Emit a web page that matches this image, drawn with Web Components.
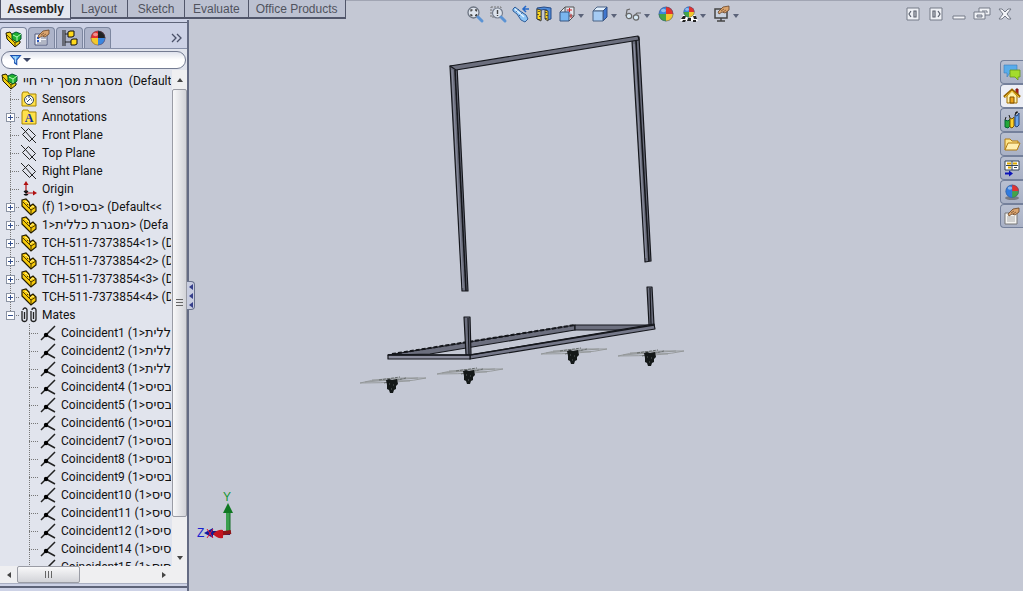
<!DOCTYPE html>
<html lang="en">
<head>
<meta charset="utf-8">
<title>Assembly</title>
<style>
html, body { margin: 0; height: 100%; }
body { background: #c4c8d4; overflow: hidden; font-family: Roboto, "DejaVu Sans", sans-serif; font-size: 12px; color: #111; }
</style>
</head>
<body>
<cad-app></cad-app>
<script>
const part = '<path d="M1 1l4-1 3 3 1 4 3-2 3 3v4l-5 4-9-9z" fill="#f6c90a" stroke="#221b00" stroke-width="1.2"/><path d="M2 3l8 8v4M10 11l5-3M5 7l3-3M8 9l3-3" fill="none" stroke="#4d3b00"/><path d="M4 3l1-1 3 3M9 9l3-2 1 1" fill="none" stroke="#ffee80" stroke-width="1"/>';
const ball = '<circle cx="8" cy="8" r="7.3" fill="#e33"/><path d="M8 .7A7.3 7.3 0 0 0 .7 8H8z" fill="#43a047"/><path d="M.7 8a7.3 7.3 0 0 0 7.3 7.3V8z" fill="#2f73dd"/><path d="M8 8v7.3A7.3 7.3 0 0 0 15.3 8z" fill="#f3c82c"/><circle cx="8" cy="8" r="7" fill="none" stroke="#4b5572" stroke-opacity=".5"/><ellipse cx="5.5" cy="4.5" rx="2.5" ry="1.8" fill="#fff" opacity=".45"/>';
const quad = (a, b, c, d) => `<circle cx="8" cy="8" r="7.3" fill="${a}"/><path d="M8 .7A7.3 7.3 0 0 1 15.3 8H8z" fill="${b}"/><path d="M.7 8a7.3 7.3 0 0 0 7.3 7.3V8z" fill="${c}"/><path d="M8 8v7.3A7.3 7.3 0 0 0 15.3 8z" fill="${d}"/><circle cx="8" cy="8" r="7" fill="none" stroke="#4b5572" stroke-opacity=".5"/><ellipse cx="5.5" cy="4.5" rx="2.5" ry="1.8" fill="#fff" opacity=".45"/>`;
const sphere = quad("#3b86e0", "#e2332f", "#43a547", "#f3c82c");
const shaded = quad("#e2332f", "#222", "#f3c82c", "#3b86e0");
const pane = quad("#2f7be0", "#e2332f", "#2f7be0", "#43a547");
const hand = '<path d="M4 6l5-5 6-1v4l-4 3-3-1-3 2z" fill="#dba56f" stroke="#6b4526" stroke-width=".8"/><path d="M7 5l3-2M9 6l3-2" stroke="#6b4526" stroke-width=".7"/>';
const ICONS = {
  assembly: '<path d="M0 2l4-1 4 5 2 3 4 1v2l-5 4-8-8z" fill="#f0cf10" stroke="#221b00"/><path d="M1 4l8 8v3M9 12l5-3" fill="none" stroke="#5a4600"/><path d="M6 3l4-2 5 2v5l-4 3-5-3z" fill="#20b030" stroke="#053"/><path d="M7 4l4 2v4M11 6l4-3" fill="none" stroke="#b8ffb8"/>',
  part,
  sensors: '<path d="M1 3l1-2h5l1 2h7v12H1z" fill="#ffe14a" stroke="#a88400"/><circle cx="8" cy="9" r="4.5" fill="#fff" stroke="#345"/><path d="M6 11l4-4M5 8h1M8 5v2M11 9h-1" stroke="#246"/>',
  annotations: '<path d="M1 3l1-2h5l1 2h7v12H1z" fill="#ffe14a" stroke="#a88400"/><text x="8" y="13" text-anchor="middle" font-family="Liberation Serif, serif" font-weight="bold" font-size="12" fill="#1530a8">A</text>',
  plane: '<path d="M7.500 1.500l7 7-6 6-7-7zM0 0l4 4M11 12l4 4M4 4l7 8" fill="none" stroke="#222"/>',
  origin: '<path d="M5 12V3M5 12h8" stroke="#b01010" stroke-width="1.2"/><path d="M5 0l2.500 4h-5zM16 12l-4 2.500v-5z" fill="#b01010"/><path d="M3 10l4 4M7 10l-4 4M5 9v6" stroke="#111" stroke-width="1.2"/>',
  mates: '<path d="M1 4v8a2.500 2.500 0 0 0 5 0V3a2 2 0 0 0-4 0M3.500 5v7M10 4v8a2.500 2.500 0 0 0 5 0V3a2 2 0 0 0-4 0M12.500 5v7" fill="none" stroke="#222" stroke-width="1.300"/>',
  coincident: '<path d="M1 15L15 1M6 10l9 5" stroke="#222" stroke-width="1.500"/><circle cx="6" cy="10" r="2.200" fill="#000"/>',
  props: '<path d="M1 4h12v11H1z" fill="#f2f4fa" stroke="#51597a"/><path d="M3 8h2M3 11h2" stroke="#2b57c0" stroke-width="2"/><path d="M7 8h5M7 11h5M3 13h9" stroke="#71798f"/>' + hand,
  config: '<path d="M1 0v16M3 0v16M3 4h3M3 12h7" stroke="#222"/><path d="M6 2l2-1h4v5l-2 1H6zM9 10l2-1h4v5l-2 1H9z" fill="#ffd91c" stroke="#111"/>',
  sphere, shaded,
  chevrons: '<path d="M3 4l4 4-4 4M8 4l4 4-4 4" fill="none" stroke="#4a5068" stroke-width="1.300"/>',
  funnel: '<path d="M1 2h13L9 8v6l-3-2V8z" fill="#65b5f4" stroke="#1c4fae" stroke-width="1.400"/><path d="M4 4h4L7 7v4" fill="none" stroke="#d8f0ff"/>',
  zoomfit: '<circle cx="6.500" cy="6.500" r="5.500" fill="#dde3ec" stroke="#6c7482" stroke-width="1.300"/><path d="M4 5.500V4h1.500M8 4h1.500v1.500M9.500 8v1.500H8M5.500 9.500H4V8" fill="none" stroke="#444" stroke-width="1.300"/><path d="M11 11l4 4" stroke="#5b93d4" stroke-width="3" stroke-linecap="round"/>',
  zoomarea: '<path d="M1 1h10v10H1z" fill="none" stroke="#777" stroke-dasharray="2 1"/><circle cx="7.500" cy="7" r="5" fill="#dde3ec" stroke="#777f8e" stroke-width="1.200"/><path d="M7.500 4v4M7.500 9v1" stroke="#444" stroke-width="1.400"/><path d="M11 11l4 4" stroke="#5b93d4" stroke-width="3" stroke-linecap="round"/>',
  prev: '<path d="M0 3l2-2 5 4 6 4 2 4-3 3-4-2-4-6-4-3z" fill="#8cc4f5" stroke="#315d98"/><path d="M3 6l3-3M6 10l4-4" stroke="#315d98"/><path d="M2 3l9 8" stroke="#e4f4ff" stroke-width="1.500"/><path d="M16 3h-5M13 0l-3 3 3 3" fill="none" stroke="#2568c8" stroke-width="1.500"/>',
  section: '<path d="M1 2q7-2 14 0v11l-4 1V4q-3-1-6 0v10l-4-1z" fill="#4e8cdc" stroke="#274b86"/><path d="M1 3l4 1v11l-4-2zM9 4l3 1v10l-3-2z" fill="#ffd91c" stroke="#444"/><path d="M3 5v1M2 8v1M4 10v1M3 13v1M10 6v1M11 9v1M10 12v1" stroke="#222" stroke-width="1.300"/>',
  orient: '<path d="M1 6l5-5h9v9l-5 5M6 1v9h9" fill="#e6e8ef" stroke="#555"/><path d="M1 6h9v9H1z" fill="#79b5ef" stroke="#3a5681"/><path d="M8 4h5M10.500 2v4M12 8v4" stroke="#c22"/>',
  cube: '<path d="M1 5l4-4h10l-4 4z" fill="#e1effc" stroke="#4b6384"/><path d="M11 5l4-4v10l-4 4z" fill="#3f77cf" stroke="#2f4d84"/><path d="M1 5h10v10H1z" fill="#a5cbf3" stroke="#4b6384"/>',
  glasses: '<path d="M1 10l1-6 3-1M9 10l3-3 4 0" fill="none" stroke="#666" stroke-width="1.200"/><circle cx="4" cy="10" r="2.700" fill="#d7e9f5" stroke="#666" stroke-width="1.200"/><circle cx="11" cy="11.500" r="2.700" fill="#d7e9f5" stroke="#666" stroke-width="1.200"/>',
  scene: '<path d="M2 9h12l3 6H-1z" fill="#fff"/><path d="M2 10h3l-1 3H0zM7 12h3v3H6zM12 10h3l1 3h-3zM2 14h3l-1 2H1zM12 14h3v2h-3z" fill="#222"/><g transform="translate(2 0) scale(.75)">' + sphere + '</g>',
  monitor: '<path d="M1 3h12v9H1z" fill="#c9d2df" stroke="#444" stroke-width="1.500"/><path d="M7 12v3M3 15h8" stroke="#444" stroke-width="1.500"/>' + hand,
  winleft: '<path d="M2 2h12v12H2z" fill="#eef0f5" stroke="#747a87"/><path d="M9 5h2v6H9zM6 5L4 8l2 3" fill="none" stroke="#5a606d" stroke-width="1.200"/>',
  winright: '<path d="M2 2h12v12H2z" fill="#eef0f5" stroke="#747a87"/><path d="M5 5h2v6H5zM10 5l2 3-2 3" fill="none" stroke="#5a606d" stroke-width="1.200"/>',
  min: '<path d="M2 10h12v3H2z" fill="#f3f4f8" stroke="#747a87"/>',
  restore: '<path d="M5 2h11v7H5z" fill="#f0f2f6" stroke="#747a87"/><path d="M8 5h5v2" fill="none" stroke="#747a87"/><path d="M0 6h11v7H0z" fill="#f0f2f6" stroke="#747a87"/><path d="M3 9h5v2H3z" fill="#c4c8d4" stroke="#747a87"/>',
  close: '<path d="M2 3h3l3 3 3-3h3l-4 5 4 5h-3l-3-3-3 3H2l4-5z" fill="#f3f4f8" stroke="#747a87"/>',
  chat: '<path d="M0 1h13v8H6l-3 4V9H0z" fill="#58aceb" stroke="#3c7db8" stroke-width=".6"/><path d="M6 6h10v7h-2v3l-3-3H6z" fill="#a4dc2c" stroke="#64961c" stroke-width=".8"/>',
  home: '<path d="M12 1h2v6h-2z" fill="#c22" stroke="#711"/><path d="M3 8l5-5 5 5v7H3z" fill="#fff3ae" stroke="#a06c00"/><path d="M0 9l8-7 8 7" fill="none" stroke="#986600" stroke-width="2.600"/><path d="M1 9l7-6 7 6" fill="none" stroke="#ffd13a"/><path d="M6 9h4v6H6z" fill="#eda61c" stroke="#805000"/>',
  library: '<path d="M1 8l3 1 2-2v7l-2 2-3-1z" fill="#25a838" stroke="#063"/><path d="M6 6l2 1 2-2v9l-2 2-2-1z" fill="#ffd22a" stroke="#750"/><path d="M11 3l2 1 2-3v12l-2 2-2-1z" fill="#6ba4ec" stroke="#247"/><path d="M1 8l1-3M6 6L5 3M11 3l1-3h2" stroke="#222"/>',
  folder: '<path d="M1 14V3h5l2 2h6v3" fill="#ffe58a" stroke="#b07a10"/><path d="M1 14l3-7h12l-3 7z" fill="#ffefb0" stroke="#b07a10"/>',
  palette: '<path d="M1 1h14v9H1z" fill="#fff" stroke="#345"/><path d="M3 3.500h4M9 3.500h4M4 7.500h3" stroke="#dba900" stroke-width="2"/><path d="M2 5.500h12M10 7.500h3M8 1v9" stroke="#345"/><path d="M1 13.500h5" stroke="#0a12b8" stroke-width="2"/><path d="M5 10.500l4 3-4 3z" fill="#0a12b8"/>',
  ballshade: '<ellipse cx="8" cy="14" rx="7" ry="2" fill="#555" opacity=".6"/><g transform="translate(1 0) scale(.9)">' + pane + '</g>',
  custom: '<path d="M1 5h12v11H1z" fill="#f4f4f2" stroke="#777"/><path d="M3 9h8M3 11h8M3 13h8" stroke="#aaa"/>' + hand
};
const icon = (name, size = 16) => `<svg width="${size}" height="${size}" viewBox="0 0 16 16" overflow="visible" aria-hidden="true">${ICONS[name]}</svg>`;

function define(name, css, html) {
  customElements.define(name, class extends HTMLElement {
    constructor() {
      super();
      this.attachShadow({ mode: "open" }).innerHTML =
        `<style>*{box-sizing:border-box} button{font:inherit;color:inherit;padding:0;border:0;background:none} svg{display:block;flex:none} ${css}</style>` +
        (typeof html === "function" ? html(this) : html);
    }
  });
}

define("ribbon-tabs", `
  :host { display:flex; height:20px; font:12px "Liberation Sans", Arial, sans-serif; color:#50535e; }
  button { height:19px; padding:0 7px; background:#bcc1d1; border:solid #51566a; border-width:0 1px 2px 0; }
  .mid { min-width:57px; }
  .wide { padding:0 8px; }
  .on { height:20px; padding:0 6px 1px; min-width:71px; background:#e4e7ef; color:#222; font-weight:bold; border-left-width:1px; border-bottom-color:#6d7288; }`,
  `<button class="on">Assembly</button><button class="mid">Layout</button><button class="mid">Sketch</button><button class="wide">Evaluate</button><button>Office Products</button>`);

define("panel-tabs", `
  :host { display:flex; gap:1px; height:26px; padding-top:4px; background:linear-gradient(#8790a9,#8790a9) 0 100%/100% 1px no-repeat #cdd2e6; }
  button { width:27px; height:21px; display:grid; place-items:center; background:#adb4ca; border:1px solid #7c869f; border-bottom:0; border-radius:4px 4px 0 0; }
  .on { background:#e4e6f0; height:22px; }
  .more { margin-left:auto; margin-right:2px; width:16px; background:none; border:0; }`,
  `<button class="on" aria-label="Feature tree">${icon("assembly")}</button><button aria-label="Properties">${icon("props")}</button><button aria-label="Configurations">${icon("config")}</button><button aria-label="Display">${icon("shaded")}</button><button class="more" aria-label="More">${icon("chevrons")}</button>`);

define("tree-filter", `
  :host { display:block; padding:2px 1px 1px; background:#e1e4ed; }
  label { display:flex; align-items:center; height:18px; padding-left:8px; background:linear-gradient(#dfe2ec,#fff 50%); border:1px solid #747c92; border-radius:9px; }
  i { margin:0 1px; border:solid transparent; border-width:4px 4px 0; border-top-color:#3b4564; }
  input { flex:1; min-width:0; height:14px; border:0; padding:0; background:none; outline:0; font:inherit; }`,
  `<label>${icon("funnel", 12)}<i></i><input aria-label="Filter tree"></label>`);

define("tree-row", `
  :host { display:flex; align-items:center; height:18px; line-height:18px; white-space:pre; }
  .guide { flex:none; align-self:stretch; width:21px; display:flex; align-items:center; padding-left:6px;
    background:repeating-linear-gradient(90deg,#777 0 1px,transparent 1px 2px) 10px 9px/10px 1px no-repeat, repeating-linear-gradient(#777 0 1px,transparent 1px 2px) 10px 0/1px 100% no-repeat; }
  :host([root]) .guide { display:none; }
  :host([root]) { padding-left:2px; }
  :host([deep]) { padding-left:19px; }
  :host([last]) .guide { background-size:10px 1px,1px 50%; }
  .guide button { width:9px; height:9px; background:linear-gradient(#34508f,#34508f) center/5px 1px no-repeat, linear-gradient(#34508f,#34508f) center/1px 5px no-repeat, #fff; border:1px solid #8b93a3; }
  .guide .open { background:linear-gradient(#34508f,#34508f) center/5px 1px no-repeat, #fff; }
  .text { margin-left:5px; height:18px; }`,
  h => `<span class="guide">${h.hasAttribute("box") ? `<button class="${h.getAttribute("box")}" aria-label="Expand or collapse"></button>` : ""}</span>${icon(h.getAttribute("icon"))}<span class="text"><slot></slot></span>`);

const row = (ic, text, attrs = "") => `<tree-row icon="${ic}" role="treeitem" ${attrs}>${text.replace(/</g, "&lt;").replace(/[\u05d0-\u05ea]+( [\u05d0-\u05ea]+)*/g, '<span lang="he">$&</span>')}</tree-row>`;
const mates = [1,2,3,4,5,6,7,8,9,10,11,12,14,15].map(n => row("coincident", `Coincident${n} (${n < 4 ? "כללית" : "בסיס"}<1`, "deep")).join("");
define("feature-tree", `
  :host { display:block; overflow:hidden; background:#e1e4ed; padding-top:2px; border-right:1px solid #e1e4ed; }
  div { overflow:hidden; }
  [lang=he] { font-size:13px; line-height:1; }`,
  `<div role="tree">` +
  row("assembly", "מסגרת מסך ירי חיי  (Default", "root") +
  row("sensors", "Sensors") + row("annotations", "Annotations", 'box="plus"') +
  row("plane", "Front Plane") + row("plane", "Top Plane") + row("plane", "Right Plane") + row("origin", "Origin") +
  row("part", "(f) בסיס<1> (Default<<", 'box="plus"') + row("part", "מסגרת כללית<1> (Defa", 'box="plus"') +
  [1,2,3,4].map(n => row("part", `TCH-511-7373854<${n}> (D`, 'box="plus"')).join("") +
  row("mates", "Mates", 'box="open" last') + mates + `</div>`);

define("scroll-bar", `
  :host { display:flex; flex-direction:column; background:#efeff1; }
  button { flex:none; width:15px; height:19px; display:grid; place-items:center; }
  i { border:solid transparent; border-width:0 3px 4px; border-bottom-color:#444; }
  .end { height:17px; }
  .end i { transform:rotate(180deg); }
  .track { flex:1; display:flex; flex-direction:column; }
  .thumb { flex:0 0 93%; display:grid; place-items:center; background:linear-gradient(90deg,#f8f8f9,#d2d3d8); border:1px solid #9a9ca5; border-radius:2px; }
  .grip { width:7px; height:7px; background:repeating-linear-gradient(#666 0 1px,transparent 1px 3px); }
  :host([horizontal]), :host([horizontal]) .track { flex-direction:row; }
  :host([horizontal]) button { width:17px; height:auto; }
  :host([horizontal]) i { transform:rotate(-90deg); }
  :host([horizontal]) .end i { transform:rotate(90deg); }
  :host([horizontal]) .thumb { flex-basis:46%; background:linear-gradient(#f8f8f9,#d2d3d8); }
  :host([horizontal]) .grip { background:repeating-linear-gradient(90deg,#666 0 1px,transparent 1px 3px); }`,
  `<button aria-label="Back"><i></i></button><div class="track"><div class="thumb"><div class="grip"></div></div></div><button class="end" aria-label="Forward"><i></i></button>`);

define("side-panel", `
  :host { display:grid; grid-template:3px auto auto minmax(0,1fr) 17px 8px / minmax(0,1fr) 15px; background:#cdd2e6; border-right:2px solid #646b83; position:relative; }
  .edge, panel-tabs, tree-filter { grid-column:1/3; }
  .edge { border-bottom:1px solid #5d6378; }
  .foot { grid-column:1/3; border-top:1px solid #a9afc2; background:linear-gradient(#5d6378,#5d6378) 0 2px/100% 2px no-repeat; }
  .corner { background:#efeff1; }
  .split { position:absolute; left:100%; top:261px; width:8px; height:29px; display:flex; flex-direction:column; align-items:center; justify-content:space-around; background:#c8cde0; border:1px solid #69728c; border-left:0; border-radius:0 4px 4px 0; }
  .split i { border:solid transparent; border-width:3px 4px 3px 0; border-right-color:#353e8a; }`,
  `<div class="edge"></div><panel-tabs></panel-tabs><tree-filter></tree-filter><feature-tree></feature-tree><scroll-bar></scroll-bar><scroll-bar horizontal></scroll-bar><div class="corner"></div><div class="foot"></div><button class="split" aria-label="Collapse panel"><i></i><i></i><i></i></button>`);

const tool = (name, label, drop) => `<button aria-label="${label}" class="${drop ? "drop" : ""}">${icon(name)}${drop ? "<i></i>" : ""}</button>`;
define("view-toolbar", `
  :host { display:flex; justify-content:center; gap:5px; height:26px; padding-right:6px; box-sizing:border-box; align-items:center; }
  button { width:18px; height:20px; display:flex; align-items:center; gap:3px; padding:0 1px; }
  .drop { width:28px; }
  i { flex:none; margin-top:3px; border:solid transparent; border-width:4px 3px 0; border-top-color:#5b6379; }`,
  tool("zoomfit","Zoom to fit") + tool("zoomarea","Zoom to area") + tool("prev","Previous view") + tool("section","Section view") + tool("orient","View orientation",1) + tool("cube","Display style",1) + tool("glasses","Hide or show",1) + tool("sphere","Appearance") + tool("scene","Scene",1) + tool("monitor","View settings",1));

define("window-controls", `
  :host { display:flex; gap:5px; }
  button { width:18px; height:18px; display:grid; place-items:center; }`,
  ["winleft","winright","min","restore","close"].map(n => `<button aria-label="${n}">${icon(n, 16)}</button>`).join(""));

define("task-pane", `
  :host { display:flex; flex-direction:column; width:23px; }
  button { height:24px; display:grid; place-items:center; background:linear-gradient(#b9c0d1,#a9b1c5); border:1px solid #74809b; border-right:0; border-radius:4px 0 0 4px; }
  .on { background:#eceef5; }`,
  ["chat","home","library","folder","palette","ballshade","custom"].map(n => `<button class="${n === "home" ? "on" : ""}" aria-label="${n}">${icon(n)}</button>`).join(""));

const caster = (x, y) => `<g transform="translate(${x} ${y})"><path d="M-32 1Q-12-5 34-4Q12 1-32 1M-27 0L26-4M-20-2L18-1" fill="none" stroke="#8d9091" stroke-width=".8"/><path d="M-13-2L8-5M-8 1L14-4" stroke="#666b6b" stroke-dasharray="3 1"/><path d="M-6-2l3-1 3 1 5-1 1 5-2 2v3l-2 1-1 3h-3l-1-3-2-1v-4z" fill="#141818"/><path d="M-3 2h1M1 3h1M-1 7h1" stroke="#596060"/></g>`;
define("model-scene", `
  :host { display:block; min-height:0; }
  svg { width:100%; height:100%; }`,
  `<svg viewBox="189 26 834 565" role="img" aria-label="Frame assembly model">
    <g fill="#6c6f7e" stroke="#15171c" stroke-width="1.200" stroke-linejoin="round">
      <path d="M450 66l7 0 11 225-6 0z"/><path d="M455 70l11 221" stroke-width="1.600"/><path d="M452 70l11 218" stroke="#8b8fa0" stroke-width="1"/>
      <path d="M632 41l7-4 12 224-6 1z"/><path d="M636 41l13 220" stroke-width="1.600"/><path d="M634 44l12 214" stroke="#8b8fa0" stroke-width="1"/>
      <path d="M450 66l188-30 1 4-183 30z"/>
      <path d="M388 355l187-30v5l-145 24z"/><path d="M392 354l183-29" stroke-width="2" stroke-dasharray="4 2"/>
      <path d="M575 325h79l-28 5h-51z"/>
      <path d="M464 317h6l1 38h-5z"/><path d="M468 318l1 36"/>
      <path d="M647 287h5l2 38h-5z"/><path d="M650 288l1 36"/>
      <path d="M470 355l184-31 1 5-185 30z" fill="#757889"/>
      <path d="M388 355h82v4h-82z" fill="#8c8e9f"/>
      <path d="M388 355h82l184-30" fill="none" stroke-width="1.600"/>
    </g>
    ${caster(392,382)}${caster(469,373)}${caster(573,353)}${caster(650,355)}
    <g>
      <path d="M208 533h22" stroke="#151b78" stroke-width="4"/><path d="M204 533l9-5v10z" fill="#1018a0"/>
      <path d="M228 533V510" stroke="#3b9f4d" stroke-width="4"/><path d="M230 533V510" stroke="#176d28"/>
      <path d="M223 513l5-10 5 10z" fill="#107822"/><path d="M231 532l-13 2" stroke="#8f1418" stroke-width="4"/>
      <path d="M213 534q5-5 10-4v8q-6 1-10-4z" fill="#c41420"/><path d="M207 529l6 9M213 529l-6 9" stroke="#e81830"/>
      <g font-family="Liberation Sans, sans-serif" font-size="12"><text x="223" y="501" fill="#169632">Y</text><text x="197" y="537" fill="#1822d0">Z</text></g>
    </g>
  </svg>`);

define("model-view", `
  :host { display:grid; grid-template-rows:auto minmax(0,1fr); position:relative; background:#c4c8d4; border-top:1px solid #a1a5b3; }
  model-scene { margin-top:-1px; }
  window-controls { position:absolute; top:4px; right:9px; }
  task-pane { position:absolute; top:59px; right:0; }`,
  `<view-toolbar></view-toolbar><model-scene></model-scene><window-controls></window-controls><task-pane></task-pane>`);

define("cad-app", `
  :host { display:grid; grid-template:20px minmax(0,1fr) / 189px minmax(0,1fr); height:100vh; background:#cdd2e6; }
  model-view { grid-area:1/2/3/3; }
  ribbon-tabs { grid-area:1/1/2/3; justify-self:start; z-index:1; }
  side-panel { grid-area:2/1/3/2; z-index:1; }`,
  `<model-view></model-view><ribbon-tabs></ribbon-tabs><side-panel></side-panel>`);
</script>
</body>
</html>
